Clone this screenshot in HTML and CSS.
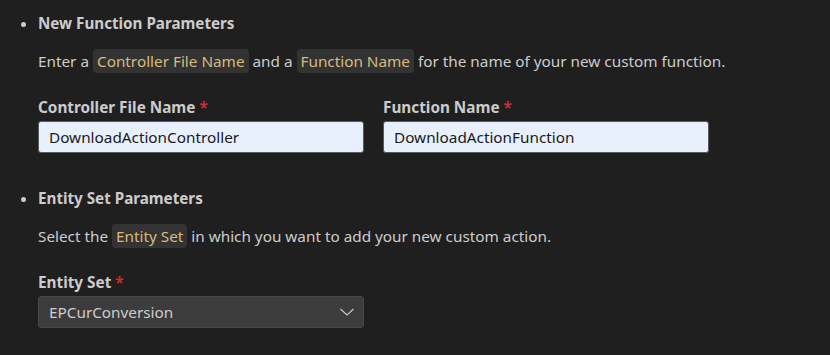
FILE: index.html
```html
<!DOCTYPE html>
<html lang="en">
<head>
    <meta charset="UTF-8">
    <title>New Custom Function</title>
    <link rel="stylesheet" href="styles.css">
</head>
<body>
    <ul class="steps">
        <li class="step">
            <h3 class="step-title">New Function Parameters</h3>
            <p class="step-text">Enter a <code>Controller File Name</code> and a <code>Function Name</code> for the name of your new custom function.</p>
            <div class="field-row">
                <div class="field">
                    <label>Controller File Name <span class="req">*</span></label>
                    <input class="text-input" type="text" value="DownloadActionController">
                </div>
                <div class="field">
                    <label>Function Name <span class="req">*</span></label>
                    <input class="text-input" type="text" value="DownloadActionFunction">
                </div>
            </div>
        </li>
        <li class="step">
            <h3 class="step-title">Entity Set Parameters</h3>
            <p class="step-text">Select the <code>Entity Set</code> in which you want to add your new custom action.</p>
            <div class="field-row">
                <div class="field">
                    <label>Entity Set <span class="req">*</span></label>
                    <div class="select">
                        <span>EPCurConversion</span>
                        <svg width="16" height="16" viewBox="0 0 16 16"><path d="M1.5 5 L8 11 L14.5 5" fill="none" stroke="#cccccc" stroke-width="1.1"/></svg>
                    </div>
                </div>
            </div>
        </li>
    </ul>
</body>
</html>
```

FILE: styles.css
```css
body {
    margin: 0;
    background: #1f1f1f;
    color: #cccccc;
    font-family: "Noto Sans", sans-serif;
    font-size: 15.3px;
}

/* Steps */
.steps {
    margin: 0;
    padding: 12px 0 0 38px;
}

.step {
    list-style: disc;
    margin-bottom: 34px;
}

.step::marker {
    color: #cccccc;
    font-size: 15px;
}

.step-title {
    margin: 0;
    font-size: 15.2px;
    font-weight: 700;
    line-height: 22px;
    color: #cccccc;
}

.step-text {
    margin: 15px 0 0;
    line-height: 25px;
}

.step-text code {
    font-family: inherit;
    color: #d7ba7d;
    background: #333333;
    border-radius: 4px;
    padding: 2px 4px;
}

/* Fields */
.field-row {
    display: flex;
    gap: 19px;
    margin-top: 23px;
}

.field {
    display: flex;
    flex-direction: column;
    width: 326px;
}

.field label {
    font-weight: 700;
    line-height: 20px;
    margin-bottom: 4px;
}

.req {
    color: #c72e2e;
}

.text-input {
    box-sizing: border-box;
    height: 32px;
    padding: 0 10px;
    background: #e8f0fe;
    border: 1px solid #5a5a5a;
    border-radius: 3px;
    font-family: inherit;
    font-size: 15.3px;
    color: #1a1a1a;
}

.select {
    box-sizing: border-box;
    height: 32px;
    padding: 0 8px 0 10px;
    display: flex;
    align-items: center;
    justify-content: space-between;
    background: #3c3c3c;
    border: 1px solid #474747;
    border-radius: 3px;
    font-size: 15.3px;
    color: #cccccc;
}
```
